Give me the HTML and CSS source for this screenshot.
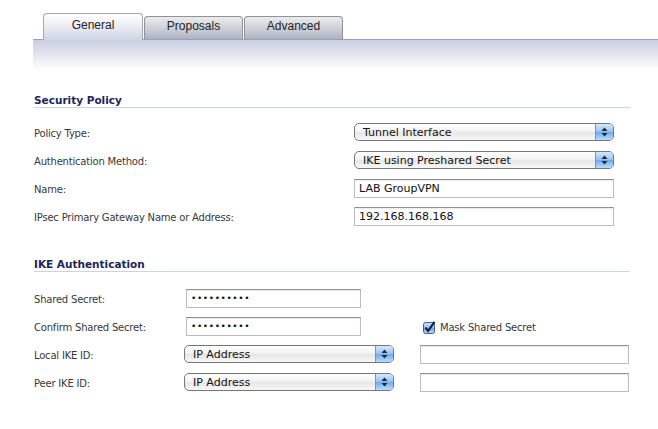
FILE: index.html
```html
<!DOCTYPE html>
<html lang="en">
  <head>
    <meta charset="UTF-8" />
    <title>VPN Policy</title>
    <link rel="stylesheet" href="styles.css">
  </head>
  <body>
    <div class="tabs">
      <div class="tab active">General</div>
      <div class="tab">Proposals</div>
      <div class="tab">Advanced</div>
    </div>
    <div class="band"></div>

    <div class="section first">
      <div class="section-title">Security Policy</div>
      <div class="form policy">
        <div class="label">Policy Type:</div>
        <div class="select">
          <span class="value">Tunnel Interface</span>
          <span class="arrows"><svg width="7" height="10" viewBox="0 0 7 10"><path d="M3.5 0.5 L6.5 4 H0.5 Z M3.5 9.5 L6.5 6 H0.5 Z" fill="#1d2a3f"/></svg></span>
        </div>

        <div class="label">Authentication Method:</div>
        <div class="select">
          <span class="value">IKE using Preshared Secret</span>
          <span class="arrows"><svg width="7" height="10" viewBox="0 0 7 10"><path d="M3.5 0.5 L6.5 4 H0.5 Z M3.5 9.5 L6.5 6 H0.5 Z" fill="#1d2a3f"/></svg></span>
        </div>

        <div class="label">Name:</div>
        <div class="field">LAB GroupVPN</div>

        <div class="label">IPsec Primary Gateway Name or Address:</div>
        <div class="field">192.168.168.168</div>
      </div>
    </div>

    <div class="section second">
      <div class="section-title">IKE Authentication</div>
      <div class="form ike">
        <div class="label">Shared Secret:</div>
        <div class="field short secret">••••••••••</div>
        <div></div>

        <div class="label">Confirm Shared Secret:</div>
        <div class="field short secret">••••••••••</div>
        <div class="check">
          <svg width="13" height="13" viewBox="0 0 13 13">
            <defs>
              <linearGradient id="cb" x1="0" y1="0" x2="0" y2="1">
                <stop offset="0" stop-color="#d6e8fb"/>
                <stop offset="0.5" stop-color="#8dbcef"/>
                <stop offset="0.55" stop-color="#6ba6ea"/>
                <stop offset="1" stop-color="#b9dcfc"/>
              </linearGradient>
            </defs>
            <rect x="0.5" y="1.5" width="11" height="11" rx="2" fill="url(#cb)" stroke="#3f5f94"/>
            <path d="M2.5 6.5 L5 10 L11.5 0.8" fill="none" stroke="#111a2c" stroke-width="2"/>
          </svg>
          <span>Mask Shared Secret</span>
        </div>

        <div class="label">Local IKE ID:</div>
        <div class="select small">
          <span class="value">IP Address</span>
          <span class="arrows"><svg width="7" height="10" viewBox="0 0 7 10"><path d="M3.5 0.5 L6.5 4 H0.5 Z M3.5 9.5 L6.5 6 H0.5 Z" fill="#1d2a3f"/></svg></span>
        </div>
        <div class="field"></div>

        <div class="label">Peer IKE ID:</div>
        <div class="select small">
          <span class="value">IP Address</span>
          <span class="arrows"><svg width="7" height="10" viewBox="0 0 7 10"><path d="M3.5 0.5 L6.5 4 H0.5 Z M3.5 9.5 L6.5 6 H0.5 Z" fill="#1d2a3f"/></svg></span>
        </div>
        <div class="field"></div>
      </div>
    </div>
  </body>
</html>
```

FILE: styles.css
```css
body {
  margin: 0;
  background: #fff;
  font-family: "DejaVu Sans", Verdana, sans-serif;
  font-size: 10px;
  color: #383838;
}
.tabs {
  display: flex;
  align-items: flex-end;
  height: 27px;
  margin: 13px 0 0 43px;
  position: relative;
  z-index: 1;
}
.tab {
  width: 99px;
  height: 23px;
  margin: 0 1px 1px 0;
  box-sizing: border-box;
  border: 1px solid #8f929e;
  border-bottom: none;
  border-radius: 4px 4px 0 0;
  background: linear-gradient(#ececec, #c3c5d0 70%, #aeb1c2);
  font: 12px "Liberation Sans", Arial, sans-serif;
  color: #222;
  text-align: center;
  line-height: 19px;
}
.tab.active {
  width: 100px;
  height: 27px;
  margin-bottom: 0;
  border-color: #a4a7b3;
  background: linear-gradient(#ffffff, #eceef4 45%, #cfd3e4);
  line-height: 23px;
}
.band {
  margin: -1px 0 0 33px;
  height: 30px;
  border-top: 1px solid #9da1b3;
  background: linear-gradient(#c8cde0, #e4e7f0 50%, #fff);
}
.section {
  margin: 0 28px 0 34px;
}
.section.first {
  margin-top: 23px;
}
.section.second {
  margin-top: 27px;
}
.section-title {
  height: 14px;
  line-height: 14px;
  font-size: 10.5px;
  font-weight: bold;
  color: #1b2559;
  border-bottom: 1px solid #c9d5e0;
}
.form {
  display: grid;
  grid-auto-rows: 28px;
  align-items: center;
}
.policy {
  grid-template-columns: 320px 260px;
  margin-top: 10px;
}
.ike {
  grid-template-columns: 152px 234px 209px;
  margin-top: 12px;
}
.label {
  padding-top: 3px;
  letter-spacing: -0.2px;
}
.select {
  display: flex;
  align-items: center;
  height: 18px;
  box-sizing: border-box;
  border: 1px solid #777;
  border-radius: 5px;
  overflow: hidden;
  background: linear-gradient(#ffffff, #f3f3f3 45%, #e6e6e6 55%, #f8f8f8);
  font: 11px "DejaVu Sans", sans-serif;
  color: #111;
}
.select.small {
  width: 210px;
  margin-left: -2px;
}
.select .value {
  flex: 1;
  padding-left: 8px;
}
.arrows {
  display: flex;
  align-items: center;
  justify-content: center;
  width: 17px;
  height: 100%;
  border-left: 1px solid #7a93bd;
  background: linear-gradient(#d8e9fc, #97c2f1 48%, #6fa9ec 52%, #b9defd);
}
.field {
  height: 19px;
  box-sizing: border-box;
  border: 1px solid #bdbdbd;
  border-top-color: #8f8f8f;
  box-shadow: inset 0 1px 1px rgba(0, 0, 0, 0.08);
  padding-left: 4px;
  font: 11px "DejaVu Sans", sans-serif;
  line-height: 17px;
  color: #111;
}
.field.short {
  width: 175px;
}
.secret {
  font-size: 9px;
  letter-spacing: 0.6px;
}
.check {
  display: flex;
  align-items: center;
  gap: 4px;
  margin-left: 3px;
  padding-top: 3px;
  letter-spacing: -0.2px;
}
```
